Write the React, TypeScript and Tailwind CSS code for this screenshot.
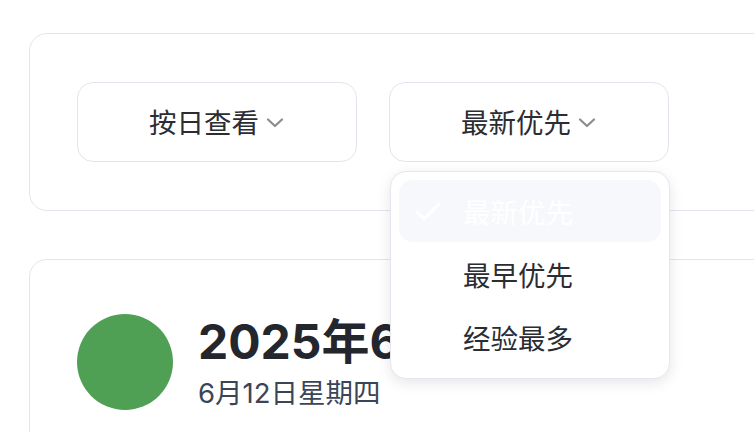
import React from "react";

const font = { fontFamily: 'Inter, "Noto Sans CJK SC", sans-serif' };

function Chevron() {
  return (
    <svg width="20" height="12" viewBox="0 0 20 12" fill="none" className="ml-[6px] mt-[-2px]">
      <path d="M3 2.5 L10 9 L17 2.5" stroke="#8c8c8c" strokeWidth="2.2" strokeLinecap="round" strokeLinejoin="round" />
    </svg>
  );
}

function Check() {
  return (
    <svg width="26" height="20" viewBox="0 0 26 20" fill="none" className="mt-[-4px]">
      <path d="M2 10 L9 17 L24 2" stroke="#ffffff" strokeWidth="2.6" strokeLinecap="round" strokeLinejoin="round" />
    </svg>
  );
}

export default function App() {
  return (
    <div className="w-[754px] h-[432px] overflow-hidden bg-white" style={font}>
      <div className="pl-[29px] pt-[33px] flex flex-col gap-[48px] w-[820px]">
        <div className="border border-[#e3e5ee] rounded-[18px] px-[47px] py-[48px] flex gap-[32px]">
          <button className="w-[280px] h-[80px] pt-[4px] border border-[#e3e5ee] rounded-[16px] flex items-center justify-center text-[27.5px] text-[#2b2d33]">
            按日查看<Chevron />
          </button>
          <div className="relative">
            <button className="w-[280px] h-[80px] pt-[4px] border border-[#e3e5ee] rounded-[16px] flex items-center justify-center text-[27.5px] text-[#2b2d33]">
              最新优先<Chevron />
            </button>
            <div className="absolute left-[1px] top-[89px] w-[280px] z-10 bg-white border border-[#e6e6f0] rounded-[16px] shadow-[0_4px_14px_rgba(0,0,0,0.10)] px-[8px] pt-[8px] pb-[10px] flex flex-col">
              <div className="h-[62px] pt-[5px] rounded-[14px] bg-[#f7f8fb] flex items-center pl-[16px] text-[27.5px] text-white">
                <Check />
                <span className="ml-[22px]">最新优先</span>
              </div>
              <div className="h-[64px] pt-[5px] flex items-center pl-[64px] text-[27.5px] text-[#2b2d33]">最早优先</div>
              <div className="h-[62px] pt-[5px] flex items-center pl-[64px] text-[27.5px] text-[#2b2d33]">经验最多</div>
            </div>
          </div>
        </div>
        <div className="border border-[#e3e5ee] rounded-[18px] px-[47px] pt-[54px] pb-[40px] flex items-start gap-[25px]">
          <div className="w-[96px] h-[96px] rounded-full bg-[#4fa055] shrink-0" />
          <div className="flex flex-col">
            <div className="text-[48px] font-bold leading-[56px] text-[#24262d]">2025年6月</div>
            <div className="text-[27.5px] leading-[40px] pt-[3px] text-[#3a4658]">6月12日星期四</div>
          </div>
        </div>
      </div>
    </div>
  );
}
